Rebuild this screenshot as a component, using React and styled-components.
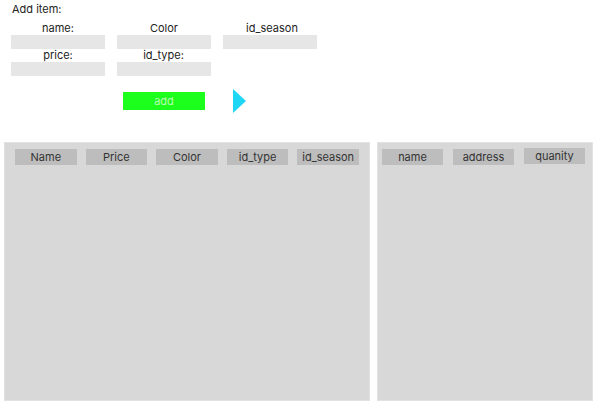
import styled, { createGlobalStyle } from "styled-components";

const GlobalStyle = createGlobalStyle`
  html, body {
    margin: 0;
    padding: 0;
    background: #ffffff;
  }
  body {
    font-family: Inter, "Noto Sans", "Liberation Sans", sans-serif;
    color: #222222;
  }
`;

const Page = styled.div`
  width: 603px;
  height: 411px;
  box-sizing: border-box;
  padding: 3px 10px 0 4px;
  display: flex;
  flex-direction: column;
`;

const FormSection = styled.section`
  padding-left: 7px;
  display: flex;
  flex-direction: column;
`;

const Title = styled.div`
  font-size: 11px;
  line-height: 13px;
  margin-left: 1px;
  height: 19px;
`;

const FieldGrid = styled.div`
  display: grid;
  grid-template-columns: repeat(3, 94px);
  column-gap: 12px;
`;

const Field = styled.label`
  display: flex;
  flex-direction: column;
  align-items: center;
  margin-left: ${(p) => p.$shift || 0}px;
`;

const FieldLabel = styled.span`
  font-size: 11px;
  line-height: 13px;
  height: 13px;
  margin-left: ${(p) => p.$offset || 0}px;
`;

const Input = styled.div`
  width: 94px;
  height: 14px;
  background: #e6e6e6;
`;

const Actions = styled.div`
  display: flex;
  align-items: center;
  padding-left: 112px;
  margin-top: 12px;
  height: 25px;
`;

const AddButton = styled.button`
  width: 82px;
  height: 18px;
  border: none;
  padding: 0;
  background: #1cff1c;
  color: #b8ffb0;
  font-family: Inter, "Noto Sans", "Liberation Sans", sans-serif;
  font-size: 11px;
  line-height: 18px;
  text-align: center;
`;

const Arrow = styled.span`
  margin-left: 28px;
  width: 0;
  height: 0;
  border-top: 12.5px solid transparent;
  border-bottom: 12.5px solid transparent;
  border-left: 13px solid #1fd6f4;
`;

const Tables = styled.div`
  margin-top: 29px;
  display: flex;
  gap: 7px;
`;

const Panel = styled.div`
  width: ${(p) => p.$width}px;
  height: 259px;
  box-sizing: border-box;
  background: #d8d8d8;
  border: 1px solid #e2e2e2;
  padding: 6px ${(p) => p.$pad}px 0;
`;

const HeaderRow = styled.div`
  display: flex;
  gap: ${(p) => p.$gap}px;
`;

const HeaderCell = styled.div`
  width: ${(p) => p.$width}px;
  height: 16px;
  background: #bdbdbd;
  font-size: 11px;
  line-height: 16px;
  color: #333333;
  text-align: center;
  white-space: nowrap;
  margin-top: ${(p) => (p.$raise ? -1 : 0)}px;
`;

const itemCols = ["Name", "Price", "Color", "id_type", "id_season"];
const stockCols = ["name", "address", "quanity"];

export default function App() {
  return (
    <>
      <GlobalStyle />
      <Page>
        <FormSection>
          <Title>Add item:</Title>
          <FieldGrid>
            <Field>
              <FieldLabel>name:</FieldLabel>
              <Input />
            </Field>
            <Field>
              <FieldLabel>Color</FieldLabel>
              <Input />
            </Field>
            <Field>
              <FieldLabel $offset={4}>id_season</FieldLabel>
              <Input />
            </Field>
            <Field>
              <FieldLabel>price:</FieldLabel>
              <Input />
            </Field>
            <Field $shift={-1}>
              <FieldLabel>id_type:</FieldLabel>
              <Input />
            </Field>
          </FieldGrid>
          <Actions>
            <AddButton>add</AddButton>
            <Arrow />
          </Actions>
        </FormSection>
        <Tables>
          <Panel $width={366} $pad={10}>
            <HeaderRow $gap={9}>
              {itemCols.map((c) => (
                <HeaderCell key={c} $width={62}>
                  {c}
                </HeaderCell>
              ))}
            </HeaderRow>
          </Panel>
          <Panel $width={216} $pad={4}>
            <HeaderRow $gap={10}>
              {stockCols.map((c, i) => (
                <HeaderCell key={c} $width={61} $raise={i === 2}>
                  {c}
                </HeaderCell>
              ))}
            </HeaderRow>
          </Panel>
        </Tables>
      </Page>
    </>
  );
}
